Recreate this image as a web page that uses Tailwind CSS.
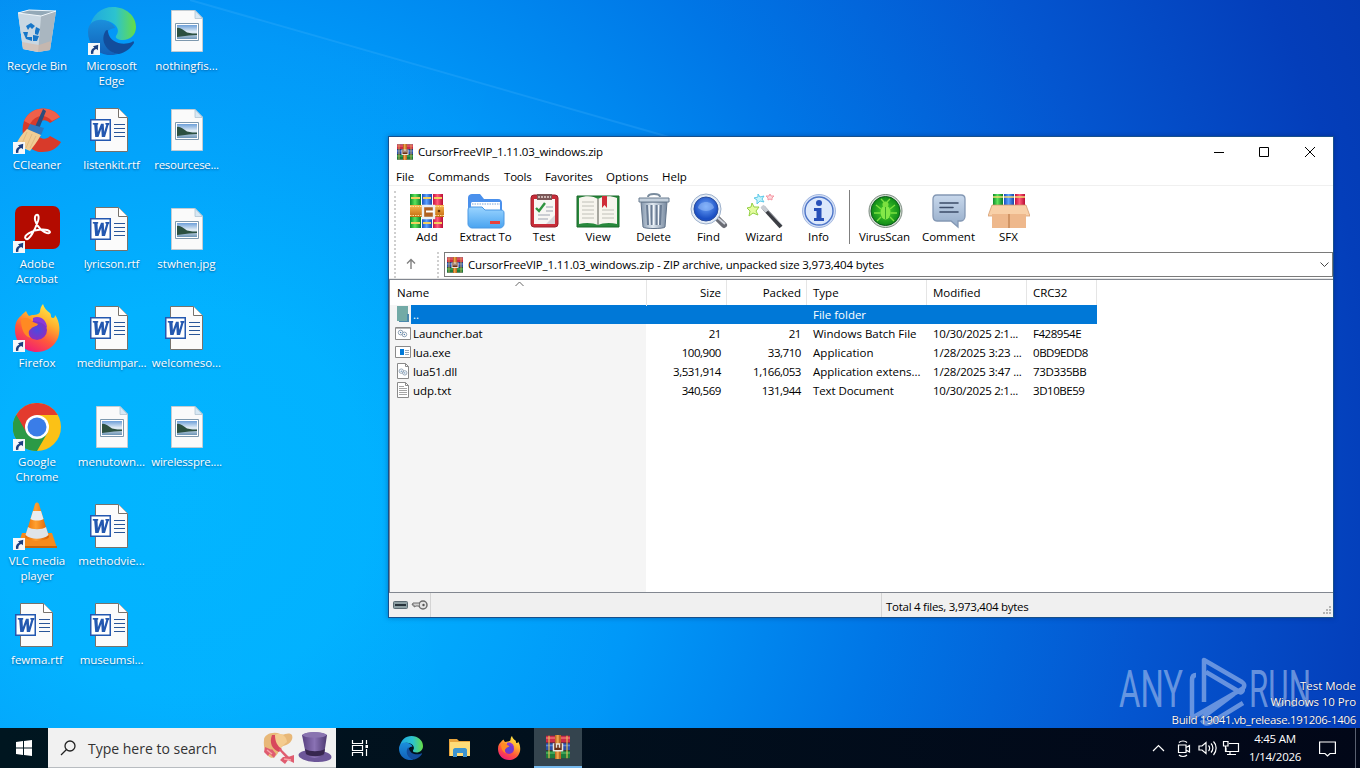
<!DOCTYPE html>
<html lang="en">
<head>
  <meta charset="UTF-8" />
  <meta name="viewport" content="width=device-width, initial-scale=1.0" />
  <title>Desktop</title>
  <script src="https://cdn.jsdelivr.net/npm/@tailwindcss/browser@4"></script>
</head>
<body class="w-[1360px] h-[768px] overflow-hidden bg-[#00a8fb] font-['Open_Sans','Noto_Sans',sans-serif] text-[11.5px] leading-[15px] text-black">

  <!-- shared icons -->
  <svg class="absolute size-0">
    <defs>
      <linearGradient id="gGreen" x1="0" x2="1"><stop offset="0" stop-color="#0c8a2c"/><stop offset=".45" stop-color="#5ce45a"/><stop offset="1" stop-color="#0a7a28"/></linearGradient>
      <linearGradient id="gBlue" x1="0" x2="1"><stop offset="0" stop-color="#1a4fc0"/><stop offset=".45" stop-color="#5aa2ff"/><stop offset="1" stop-color="#1a46a8"/></linearGradient>
      <linearGradient id="gRed" x1="0" x2="1"><stop offset="0" stop-color="#c8103c"/><stop offset=".45" stop-color="#ff5a7a"/><stop offset="1" stop-color="#b80c34"/></linearGradient>
      <linearGradient id="gBelt" x1="0" x2="0" y1="0" y2="1"><stop offset="0" stop-color="#f8b850"/><stop offset="1" stop-color="#c46a10"/></linearGradient>
      <linearGradient id="gEdge1" x1="0" x2="1"><stop offset="0" stop-color="#1fa8e0"/><stop offset=".55" stop-color="#2cc3cf"/><stop offset="1" stop-color="#66dd45"/></linearGradient>
      <linearGradient id="gEdge2" x1="0" x2="0" y1="0" y2="1"><stop offset="0" stop-color="#1b8fdc"/><stop offset="1" stop-color="#1260b8"/></linearGradient>
      <linearGradient id="gFox" x1=".8" y1="0" x2=".3" y2="1"><stop offset="0" stop-color="#fff04a"/><stop offset=".35" stop-color="#ffb02e"/><stop offset=".65" stop-color="#ff5a3a"/><stop offset="1" stop-color="#f01a78"/></linearGradient>
      <linearGradient id="gCone" x1="0" x2="1"><stop offset="0" stop-color="#e86a00"/><stop offset=".45" stop-color="#ffa030"/><stop offset="1" stop-color="#d85c00"/></linearGradient>
      <linearGradient id="gPhoto" x1="0" x2="0" y1="0" y2="1"><stop offset="0" stop-color="#6d9fd8"/><stop offset=".5" stop-color="#e4eef6"/><stop offset="1" stop-color="#6b93b4"/></linearGradient>
      <linearGradient id="gFolder" x1="0" x2="0" y1="0" y2="1"><stop offset="0" stop-color="#9ad4ff"/><stop offset="1" stop-color="#4aa4f0"/></linearGradient>
      <linearGradient id="gSteel" x1="0" x2="1"><stop offset="0" stop-color="#8496ac"/><stop offset=".45" stop-color="#dfe8f0"/><stop offset="1" stop-color="#75879e"/></linearGradient>
      <linearGradient id="gNote" x1="0" x2="0" y1="0" y2="1"><stop offset="0" stop-color="#c8d8ec"/><stop offset="1" stop-color="#94abc8"/></linearGradient>
      <radialGradient id="gLens" cx=".5" cy=".4"><stop offset="0" stop-color="#6aa2f8"/><stop offset="1" stop-color="#1c50c4"/></radialGradient>
      <radialGradient id="gBug"><stop offset="0" stop-color="#4cd42c"/><stop offset="1" stop-color="#108a18"/></radialGradient>
      <radialGradient id="gPurple"><stop offset="0" stop-color="#4a4be0"/><stop offset="1" stop-color="#8a2fc0"/></radialGradient>
      <linearGradient id="gHat" x1="0" x2="1"><stop offset="0" stop-color="#584080"/><stop offset=".5" stop-color="#8a72b4"/><stop offset="1" stop-color="#4c3870"/></linearGradient>
    </defs>

    <symbol id="shortcut" viewBox="0 0 12 12">
      <path d="M0 0h12v12H0z" fill="#f6f8fa"/>
      <path d="M3 11C2.400 7.500 4 5.500 6.300 4.800L5 3.200 10.200 1.800 9.900 7.200 8.300 6C6.400 6.500 5 8 5.400 10.800z" fill="#1c3f80"/>
    </symbol>

    <symbol id="rtf" viewBox="0 0 48 48">
      <path d="M7.500 2.500H30.500L39.500 11.500V45.500H7.500z" fill="#fbfbfb" stroke="#77726c"/>
      <path d="M30.500 2.500V11.500H39.500" fill="#fff" stroke="#77726c"/>
      <path d="M26 18.500H37M26 22.500H37M26 26.500H37M26 30.500H37" stroke="#2a5699" stroke-width="1.200"/>
      <path d="M2 13H23V35H2z" fill="#2458b0"/>
      <path d="M3.500 14.500H21.500V33.500H3.500z" fill="#fff"/>
      <path d="M4.800 17H10.200V18.500L9.500 18.700 9.900 26 13 17.800H15.700L16.200 26 18.300 18.700 17.400 18.500V17H21.500L21.200 18.700 20.500 19 17 31H13.800L13.300 23 10.500 31H7.200L6.200 18.800 4.800 18.600z" fill="#2458b0"/>
    </symbol>

    <symbol id="jpg" viewBox="0 0 48 48">
      <path d="M8.500 3.500H32L39.500 11V44.500H8.500z" fill="#fafafa" stroke="#c4ccd2"/>
      <path d="M32 3.500V11.500H39.500z" fill="#d8e8f4" stroke="#b0c4d2" stroke-width=".8"/>
      <path d="M12.500 16.500H35.500V33.500H12.500z" fill="#fff" stroke="#7d98ae"/>
      <path d="M14 18H34V32H14z" fill="url(#gPhoto)"/>
      <path d="M14 21C17 20 20 23 24 25.500 28 26.500 31 26.500 34 26.600V28L26 28.500 14 30z" fill="#2c5040"/>
    </symbol>

    <symbol id="edge" viewBox="0 0 48 48">
      <path d="M2 20C4 8 13 0 25 0 38 0 48 9 48 20 48 28 42 33 35 33 30 33 27 31 28 29 30 26 31 23 28 19 24 14 15 12 8 15 5 16 3 18 2 20z" fill="url(#gEdge1)"/>
      <path d="M0 25C0 16 7 12 15 13 22 14 26 18 27 21 18 22 15 30 18 37 20 42 25 46 30 47 13 52 0 40 0 25z" fill="url(#gEdge2)"/>
      <path d="M17 25C12 34 19 46 31 47 38 45 43 41 46 36 46 34 45 34 44 35 35 39 22 36 20 25 20 22 18 23 17 25z" fill="#124d9c"/>
    </symbol>

    <symbol id="firefox" viewBox="0 0 48 48">
      <path d="M30 0C31 4 34 7 37 9 38 10 38 12 38 13 40 15 42 14 42 11 47 17 48 29 44 36 40 44 32 48 24 48 12 48 2 39 2 26 2 18 5 14 8 12 9 10 12 8 13 7 14 9 15 11 16 12 20 10 25 12 27 8 27 5 28 2 30 0z" fill="url(#gFox)"/>
      <circle cx="24" cy="26" r="10" fill="url(#gPurple)"/>
      <path d="M8 16C12 12 18 15 20 18L25 20C24 23 19 22 18 25 15 26 15 31 18 34 12 33 8 26 8 16z" fill="#ff8a22"/>
      <path d="M20 14C27 11 34 16 34 24 30 18 26 18 20 17z" fill="#8a3ad8"/>
    </symbol>

    <symbol id="rar" viewBox="0 0 32 32">
      <path d="M0 1H32V31H0z" fill="#3c2438"/>
      <path d="M0 1H32V10H0z" fill="#c82c48"/><path d="M0 3H32V5H0z" fill="#ec6c74"/>
      <path d="M0 11H32V20H0z" fill="#2c50a8"/><path d="M0 13H32V15H0z" fill="#5a84d8"/>
      <path d="M0 21H32V31H0z" fill="#1c7c3c"/><path d="M0 23H32V25H0z" fill="#4cb060"/>
      <path d="M3 1H5V31H3zM27 1H29V31H27z" fill="#e8c050" opacity=".75"/>
      <path d="M12 0H20V32H12z" fill="#c06c24"/><path d="M14 0H17V32H14z" fill="#eca44c"/>
      <path d="M9 11H23V22H9z" fill="#e8e4dc"/><path d="M11 11H13V17H15V13H17V17H19V11H21V20H11z" fill="#6a3018"/>
    </symbol>

    <symbol id="gears" viewBox="0 0 16 16">
      <g fill="none" stroke="#8a9db0"><circle cx="6" cy="7" r="2.500"/><circle cx="10" cy="9" r="2.500"/></g>
      <circle cx="6" cy="7" r=".8" fill="#4f81b0"/><circle cx="10" cy="9" r=".8" fill="#4f81b0"/>
    </symbol>
  </svg>

  <!-- wallpaper -->
  <svg class="absolute inset-0 -z-10" width="1360" height="728" viewBox="0 0 1360 728">
    <defs>
      <radialGradient id="wall" gradientUnits="userSpaceOnUse" cx="180" cy="500" r="1290">
        <stop offset="0" stop-color="#00b4ff"/><stop offset=".15" stop-color="#00b1ff"/><stop offset=".36" stop-color="#0098f8"/>
        <stop offset=".55" stop-color="#0076e6"/><stop offset=".75" stop-color="#0456d0"/><stop offset=".93" stop-color="#043eba"/><stop offset="1" stop-color="#043ab2"/>
      </radialGradient>
      <linearGradient id="beam" x1="0" x2="1"><stop offset="0" stop-color="#fff" stop-opacity=".015"/><stop offset="1" stop-color="#fff" stop-opacity="0"/></linearGradient>
    </defs>
    <path d="M0 0H1360V728H0z" fill="url(#wall)"/>
    <path d="M190 0L700 146V728H0V0z" fill="url(#beam)"/>
    <path d="M190 0L690 143" stroke="#5cc0ff" stroke-opacity=".2" stroke-width="2"/>
  </svg>

  <div class="flex h-[728px] relative">
    <!-- desktop icons, one list per column -->
    <ul class="w-[74px] pt-[7px] text-white text-center [text-shadow:0_1px_2px_rgb(0_40_90/0.6)]">
      <li class="h-[99px] flex flex-col items-center">
        <svg class="size-12 mb-[3px]" viewBox="0 0 48 48">
          <path d="M5 6L16 3 43 4 37 43 25 45 10 42z" fill="#dce4ea"/>
          <path d="M5 6L28 9 25 45 10 42z" fill="#c9d7e2"/>
          <path d="M28 9L43 4 37 43 25 45z" fill="#a9b6c0"/>
          <path d="M5 6L16 3 43 4 28 9z" fill="#93a9b8" stroke="#eef5fa"/>
          <path d="M9 35L26 38 38 34 37 43 25 45 10 42z" fill="#d8b8a4" opacity=".6"/>
          <g fill="#1676c8"><path d="M13 19L18 16 22 19 19 22 17 20 15 23z"/><path d="M23 20L27 22 25 28 22 27 22 24z"/><path d="M10 25L15 25 14 30 19 30 19 34 13 32z"/><path d="M20 28L26 29 24 34 20 34z"/></g>
        </svg>
        <span>Recycle Bin</span>
      </li>
      <li class="h-[99px] flex flex-col items-center relative">
        <svg class="size-12 mb-[3px]" viewBox="0 0 48 48">
          <path d="M47 11C38-2 17 0 11 15 6 31 15 46 29 46 37 46 44 43 48 36L37 30C33 35 25 33 24 26 23 17 30 10 37 17z" fill="#d83a2a"/>
          <path d="M47 11C38-2 17 0 11 15L17 18C22 9 32 7 39 15z" fill="#f0604a"/>
          <path d="M30 3L33 5 26 23 22 21z" fill="#2c4c7c"/>
          <path d="M17 18L31 22 28 29 14 24z" fill="#2f78c0"/>
          <path d="M14 23L28 29C24 36 20 41 17 45L3 39C5 33 9 28 14 23z" fill="#f0cd94"/>
          <path d="M14 26L8 40M19 28L13 42M23 30L17 42" stroke="#d8b078" stroke-width=".7"/>
        </svg>
        <svg class="absolute left-[13px] top-[36px] size-3"><use href="#shortcut"/></svg>
        <span>CCleaner</span>
      </li>
      <li class="h-[99px] flex flex-col items-center relative">
        <svg class="size-12 mb-[3px]" viewBox="0 0 48 48">
          <rect x="2" y="1" width="45" height="43" rx="7" fill="#b30b00"/>
          <path d="M13 34C9 31 19 25 28 24.500 38 24 39 29 34 28 27 26 21 17 22 12 23 8 27 9 25 16 22 25 16 36 13 34z" fill="none" stroke="#fff" stroke-width="2"/>
        </svg>
        <svg class="absolute left-[13px] top-[36px] size-3"><use href="#shortcut"/></svg>
        <span>Adobe<br />Acrobat</span>
      </li>
      <li class="h-[99px] flex flex-col items-center relative">
        <svg class="size-12 mb-[3px]"><use href="#firefox"/></svg>
        <svg class="absolute left-[13px] top-[36px] size-3"><use href="#shortcut"/></svg>
        <span>Firefox</span>
      </li>
      <li class="h-[99px] flex flex-col items-center relative">
        <svg class="size-12 mb-[3px]" viewBox="0 0 48 48">
          <circle cx="24" cy="24" r="24" fill="#fbc116"/>
          <path d="M24 24L34.400 30 24 48A24 24 0 0 1 3.200 12z" fill="#2b9a46"/>
          <path d="M3.200 12A24 24 0 0 1 44.800 12H24L13.600 30z" fill="#e33b2e"/>
          <path d="M3.200 12L13.600 30 24 36 24 48A24 24 0 0 1 3.200 12z" fill="#2b9a46"/>
          <circle cx="24" cy="24" r="12" fill="#fff"/><circle cx="24" cy="24" r="9.500" fill="#3a7de8"/>
        </svg>
        <svg class="absolute left-[13px] top-[36px] size-3"><use href="#shortcut"/></svg>
        <span>Google<br />Chrome</span>
      </li>
      <li class="h-[99px] flex flex-col items-center relative">
        <svg class="size-12 mb-[3px]" viewBox="0 0 48 48">
          <path d="M9 31H39L44 46H4z" fill="#f58a1c"/><path d="M4 44H44V46H4z" fill="#c86408"/>
          <path d="M22 2C23 0 25 0 26 2L36 35C32 40 16 40 12 35z" fill="url(#gCone)"/>
          <path d="M20 9H28L30.500 17C27 19 21 19 17.500 17z" fill="#e9edf0"/>
          <path d="M15 25C19 28 29 28 33 25L35.500 33C30 38 18 38 12.500 33z" fill="#dfe4e8"/>
        </svg>
        <svg class="absolute left-[13px] top-[36px] size-3"><use href="#shortcut"/></svg>
        <span>VLC media<br />player</span>
      </li>
      <li class="h-[99px] flex flex-col items-center">
        <svg class="size-12 mb-[3px]"><use href="#rtf"/></svg>
        <span>fewma.rtf</span>
      </li>
    </ul>
    <ul class="w-[75px] pt-[7px] text-white text-center [text-shadow:0_1px_2px_rgb(0_40_90/0.6)]">
      <li class="h-[99px] flex flex-col items-center relative">
        <svg class="size-12 mb-[3px]"><use href="#edge"/></svg>
        <svg class="absolute left-[14px] top-[36px] size-3"><use href="#shortcut"/></svg>
        <span>Microsoft<br />Edge</span>
      </li>
      <li class="h-[99px] flex flex-col items-center"><svg class="size-12 mb-[3px]"><use href="#rtf"/></svg><span class="tracking-[-0.1px]">listenkit.rtf</span></li>
      <li class="h-[99px] flex flex-col items-center"><svg class="size-12 mb-[3px]"><use href="#rtf"/></svg><span class="tracking-[-0.1px]">lyricson.rtf</span></li>
      <li class="h-[99px] flex flex-col items-center"><svg class="size-12 mb-[3px]"><use href="#rtf"/></svg><span class="tracking-[-0.2px]">mediumpar...</span></li>
      <li class="h-[99px] flex flex-col items-center"><svg class="size-12 mb-[3px]"><use href="#jpg"/></svg><span>menutown...</span></li>
      <li class="h-[99px] flex flex-col items-center"><svg class="size-12 mb-[3px]"><use href="#rtf"/></svg><span>methodvie...</span></li>
      <li class="h-[99px] flex flex-col items-center"><svg class="size-12 mb-[3px]"><use href="#rtf"/></svg><span class="tracking-[-0.1px]">museumsi...</span></li>
    </ul>
    <ul class="w-[75px] pt-[7px] text-white text-center [text-shadow:0_1px_2px_rgb(0_40_90/0.6)]">
      <li class="h-[99px] flex flex-col items-center"><svg class="size-12 mb-[3px]"><use href="#jpg"/></svg><span>nothingfis...</span></li>
      <li class="h-[99px] flex flex-col items-center"><svg class="size-12 mb-[3px]"><use href="#jpg"/></svg><span class="tracking-[-0.3px]">resourcese...</span></li>
      <li class="h-[99px] flex flex-col items-center"><svg class="size-12 mb-[3px]"><use href="#jpg"/></svg><span>stwhen.jpg</span></li>
      <li class="h-[99px] flex flex-col items-center"><svg class="size-12 mb-[3px]"><use href="#rtf"/></svg><span>welcomeso...</span></li>
      <li class="h-[99px] flex flex-col items-center"><svg class="size-12 mb-[3px]"><use href="#jpg"/></svg><span class="tracking-[-0.2px]">wirelesspre....</span></li>
    </ul>

    <!-- watermark -->
    <svg class="absolute left-[1110px] top-[650px] overflow-visible" width="210" height="74" viewBox="0 0 210 74">
      <g fill="#a9c2ee" fill-opacity=".6" font-family="Roboto" font-size="51">
        <text x="9" y="57" textLength="64" lengthAdjust="spacingAndGlyphs">ANY</text>
        <text x="139" y="57" textLength="62" lengthAdjust="spacingAndGlyphs">RUN</text>
      </g>
      <path d="M86 25C83 25 82 27 82 30V68L132 39C135 37 135 34 132 32L94 10V52M92 70C94 74 98 74 102 72L133 53M96 22L128 41C131 44 134 41 132 38M92 68L124 44" fill="none" stroke="#a9c2ee" stroke-opacity=".6" stroke-width="4.500" stroke-linejoin="round"/>
    </svg>
    <div class="absolute right-[4px] top-[678px] text-right text-white flex flex-col [text-shadow:0_0_1px_#003]">
      <span class="h-4">Test Mode</span>
      <span class="h-[18px] tracking-[-0.08px]">Windows 10 Pro</span>
      <span class="tracking-[-0.32px]">Build 19041.vb_release.191206-1406</span>
    </div>

    <!-- archive window -->
    <main class="absolute left-[388px] top-[136px] w-[946px] h-[482px] border border-[#17508c] bg-white flex flex-col shadow-[0_0_5px_rgb(0_20_80/0.35)]">
      <header class="h-[29px] mb-px flex items-center pl-2 shrink-0">
        <svg class="size-4 mr-[5px]"><use href="#rar"/></svg>
        <span class="flex-1 tracking-[-0.19px]">CursorFreeVIP_1.11.03_windows.zip</span>
        <svg width="138" height="28" viewBox="0 0 138 28" fill="none" stroke="#000">
          <path d="M19 14.500H29"/><path d="M64.500 9.500H73.500V18.500H64.500z"/><path d="M110 9L120 19M120 9L110 19"/>
        </svg>
      </header>
      <nav class="h-[19px] flex items-center shrink-0 pl-[7px] border-b border-[#f0f0f0]">
        <span class="w-[32px]">File</span><span class="w-[76px]">Commands</span><span class="w-[41px] tracking-[-0.2px]">Tools</span><span class="w-[61px] tracking-[-0.1px]">Favorites</span><span class="w-[56px]">Options</span><span>Help</span>
      </nav>

      <div class="h-[64px] shrink-0 flex pt-[7px] pl-[5px] text-center">
        <i class="h-[59px] w-[5px] border-l-2 border-dotted border-[#cfcfcf] mr-px -mt-0.5"></i>
        <div class="w-[54px] flex flex-col items-center">
          <svg class="size-9" viewBox="0 0 36 36">
            <path d="M1 1H12V35H1z" fill="url(#gGreen)"/><path d="M13 1H23V35H13z" fill="url(#gBlue)"/><path d="M24 1H34V35H24z" fill="url(#gRed)"/>
            <path d="M2 4H11V6H2zM14 4H22V6H14zM25 4H33V6H25zM2 29H11V31H2zM14 29H22V31H14zM25 29H33V31H25z" fill="#f2d060"/>
            <path d="M1 12H35V24H1z" fill="url(#gBelt)"/><path d="M1 13.500H35M1 22.500H35" stroke="#ffe09a" stroke-dasharray="1.500 1"/>
            <path d="M14 13H25V25H14z" fill="#b06020" stroke="#eceff2" stroke-width="2.400"/><path d="M17 18.500H25" stroke="#fff" stroke-width="2"/>
            <circle cx="30" cy="18" r="1.300" fill="#6c3408"/>
          </svg>Add
        </div>
        <div class="w-[63px] flex flex-col items-center">
          <svg class="size-9 overflow-visible" viewBox="0 0 36 36">
            <path d="M0 5C0 2 2 1 4 1H12L16 6H30C33 6 34 8 34 10V20H0z" fill="#4a90ec"/>
            <path d="M3 11C3 9 4 9 5 9H32V22H3z" fill="#fff"/><path d="M4 11H32" stroke="#a8c4e4" stroke-width="1.500" stroke-dasharray="1.500 1"/>
            <path d="M0 17C0 15 1 14 3 14H14L17 17H33C35 17 36 18 36 20V31C36 33 34 35 32 35H4C2 35 0 33 0 31z" fill="url(#gFolder)" stroke="#4a98e4"/>
            <rect x="22" y="28" width="10" height="3" fill="#e8403c"/>
          </svg><span class="tracking-[-0.15px]">Extract To</span>
        </div>
        <div class="w-[54px] flex flex-col items-center">
          <svg class="size-9" viewBox="0 0 36 36">
            <rect x="5" y="2" width="27" height="32" rx="3" fill="#c82c38" stroke="#98202c"/>
            <path d="M8 6H29V31H8z" fill="#f8f6f4"/>
            <path d="M11 1H26V7H11z" fill="#7c5858"/><path d="M12 4H25" stroke="#e8d4d0" stroke-width="1.500" stroke-dasharray="2 1"/>
            <path d="M10 15L13 18 19 10" fill="none" stroke="#2f9440" stroke-width="2.400"/>
            <path d="M20 14H27M20 18H27M12 22H24M12 26H22" stroke="#bcc0c8" stroke-width="1.300"/>
            <path d="M29 22L20 31H29z" fill="#d8d6da"/>
          </svg>Test
        </div>
        <div class="w-[54px] flex flex-col items-center">
          <svg class="w-[44px] h-9" viewBox="0 0 44 36">
            <path d="M1 3H43V34H1z" fill="#28883c" stroke="#186828"/>
            <path d="M3 5C10 2 18 3 22 6 26 3 34 2 41 5V31C34 29 26 30 22 32 18 30 10 29 3 31z" fill="#f7f5ee"/>
            <path d="M6 9H18M6 13H18M6 17H18M6 21H18M6 25H18M26 17H38M26 21H38M26 25H38" stroke="#c0c0b8"/>
            <path d="M22 6V32" stroke="#8c8c84" stroke-width="1.500"/>
            <path d="M26 3H31V15L28.500 12 26 15z" fill="#d02c38"/>
          </svg>View
        </div>
        <div class="w-[57px] flex flex-col items-center">
          <svg class="size-9" viewBox="0 0 36 36">
            <path d="M5 9H31L29 34C28 36 8 36 7 34z" fill="url(#gSteel)" stroke="#62748a"/>
            <path d="M11 12L12 32M15.500 12V32M20.500 12V32M25 12L24 32" stroke="#6a7c94" stroke-width="2"/>
            <path d="M13 12L14 32M17.500 12V32M22.500 12V32" stroke="#f4f8fc"/>
            <path d="M3 5H33V9H3z" fill="#c4d0dc" stroke="#6a7c90"/><path d="M12 4C12 0 24 0 24 4" fill="none" stroke="#7a8c9e" stroke-width="2"/>
          </svg>Delete
        </div>
        <div class="w-[53px] flex flex-col items-center">
          <svg class="size-9 overflow-visible" viewBox="0 0 36 36">
            <path d="M26 25L33 32" stroke="#6a6c74" stroke-width="6" stroke-linecap="round"/><path d="M27 25L34 31" stroke="#d0d4dc" stroke-width="2"/>
            <circle cx="15" cy="16" r="15" fill="#e4ecf6" stroke="#9cb0cc"/>
            <circle cx="15" cy="16" r="12" fill="url(#gLens)" stroke="#2a4c9c"/>
            <path d="M7 15C8 7 22 7 23 15 18 19 12 19 7 15z" fill="#a8ccff" opacity=".45"/>
          </svg>Find
        </div>
        <div class="w-[58px] flex flex-col items-center">
          <svg class="size-9 overflow-visible" viewBox="0 0 36 36">
            <path d="M17 14L35 34" stroke="#3c3e44" stroke-width="4"/><path d="M18 13L36 32" stroke="#a8acb4"/><path d="M16 13L21 18.500" stroke="#c8ccd2" stroke-width="4"/>
            <path d="M6 10L8 14 13 14 10 18 12 22 7 20 3 23 4 18 1 15 5 14z" fill="#e4fca0" stroke="#94d044"/>
            <path d="M12 1L14 4 18 3 16 6 18 9 14 8 11 11 11 7 8 5 12 4z" fill="#c4f4fc" stroke="#5cc8e8"/>
            <path d="M24 1L25 3 28 3 26 5 26 7 24 6 22 7 22 5 20 3 23 3z" fill="#ffd8dc" stroke="#f498a4"/>
          </svg>Wizard
        </div>
        <div class="w-[51px] flex flex-col items-center">
          <svg class="size-9" viewBox="0 0 36 36">
            <circle cx="18" cy="18" r="16.500" fill="#d4e0f6" stroke="#a4b8e0"/>
            <circle cx="18" cy="18" r="14" fill="#dce8fb" stroke="#4c74c8" stroke-width="1.400"/>
            <circle cx="18" cy="10" r="3" fill="#2850b8"/><path d="M13 15H20.500V25H23V28H13V25H15.500V18H13z" fill="#2850b8"/>
          </svg>Info
        </div>
        <i class="w-px h-[54px] bg-[#7f7f7f] ml-[5px] mr-[3px] -mt-[3px]"></i>
        <div class="w-[63px] flex flex-col items-center">
          <svg class="size-9" viewBox="0 0 36 36">
            <circle cx="18.500" cy="18" r="16.500" fill="#d4dcd4" stroke="#7c8c80"/><circle cx="18.500" cy="18" r="14.500" fill="url(#gBug)" stroke="#0a5c18"/>
            <ellipse cx="18.500" cy="19.500" rx="5" ry="7" fill="#84e848"/><circle cx="18.500" cy="11.500" r="3" fill="#7ce040"/>
            <path d="M14 16L9 12M13.500 20H7M14 24L10 28M23 16L28 12M23.500 20H30M23 24L27 28M17 9L14 6M20 9L23 6" stroke="#7ce040" stroke-width="1.400"/><path d="M18.500 14V26" stroke="#38a828"/>
          </svg><span class="tracking-[-0.15px]">VirusScan</span>
        </div>
        <div class="w-[65px] flex flex-col items-center">
          <svg class="size-9" viewBox="0 0 36 36">
            <path d="M6 2H30C33 2 34 4 34 6V23C34 26 32 28 30 28H27L27 34 20 28H6C3 28 2 26 2 23V6C2 4 3 2 6 2z" fill="url(#gNote)" stroke="#8498b4" stroke-width="1.300"/>
            <path d="M9 10H27M9 14.500H22M9 19H27" stroke="#3c4c68" stroke-width="1.600" stroke-linecap="round"/>
          </svg>Comment
        </div>
        <div class="w-[55px] flex flex-col items-center">
          <svg class="w-[42px] h-9" viewBox="0 0 42 36">
            <path d="M5 1H15V14H5z" fill="url(#gGreen)"/><path d="M16 1H26V14H16z" fill="url(#gBlue)"/><path d="M27 1H37V14H27z" fill="url(#gRed)"/><path d="M5 4H15M16 4H26M27 4H37" stroke="#f4dc70" stroke-width="1.500"/>
            <path d="M4 12H38V35H4z" fill="#d89c70"/><path d="M4 12L0 23H20L38 23H42L38 12z" fill="#f8d0a8" stroke="#d09464" stroke-width=".7"/>
            <path d="M4 21H38V35H4z" fill="#eeb88c"/><path d="M20 21H22V35H20z" fill="#d09464"/>
          </svg>SFX
        </div>
      </div>

      <div class="h-[29px] shrink-0 flex pl-[5px] pt-0.5 border-b border-[#e6e6e6]">
        <i class="w-[12px] border-l-2 border-dotted border-[#cfcfcf]"></i>
        <svg class="mt-1.5" width="10" height="12" viewBox="0 0 10 12" fill="none" stroke="#808080" stroke-width="1.400"><path d="M5 11V1.500M1 5.500L5 1.500 9 5.500"/></svg>
        <i class="w-[7px] border-l-2 border-dotted border-[#cfcfcf] ml-[21px]"></i>
        <div class="flex-1 h-[25px] border border-[#7a7a7a] flex items-center pl-0.5">
          <svg class="size-4 mr-[5px]"><use href="#rar"/></svg>
          <span class="flex-1 tracking-[-0.155px]">CursorFreeVIP_1.11.03_windows.zip - ZIP archive, unpacked size 3,973,404 bytes</span>
          <svg class="mr-[3px]" width="9" height="6" fill="none" stroke="#444"><path d="M.5 .5L4.500 4.500 8.500 .5"/></svg>
        </div>
      </div>

      <section class="flex-1 border-t border-l border-b border-[#828790] relative bg-[linear-gradient(#f5f5f5,#f5f5f5)] bg-no-repeat bg-size-[256px_100%]">
        <div class="grid grid-cols-[257px_80px_80px_120px_100px_70px] h-[25px] bg-white leading-[26px] *:border-r *:border-[#e5e5e5] *:px-[6px]">
          <div class="relative !pl-[7px]">Name<svg class="absolute left-[125px] top-[1px]" width="9" height="6" fill="none" stroke="#666"><path d="M.5 5L4.500 1 8.500 5"/></svg></div>
          <div class="text-right !px-[5px]">Size</div><div class="text-right !px-[5px]">Packed</div><div>Type</div><div>Modified</div><div class="tracking-[-0.1px]">CRC32</div>
        </div>
        <div class="grid grid-cols-[21px_236px_80px_80px_120px_100px_70px] auto-rows-[19px] leading-[19px] whitespace-nowrap">
          <svg width="21" height="19" viewBox="0 0 21 19"><path d="M7 1H18V16H7z" fill="#72aaa6"/><path d="M17 9H19V17H9V16H17z" fill="#4a88ac"/></svg>
          <div class="col-span-6 bg-[#0078d7] text-white grid grid-cols-[396px_1fr]"><span class="pl-0.5">..</span><span class="pl-[6px]">File folder</span></div>

          <svg width="21" height="19" viewBox="0 0 21 19"><path d="M5.500 3.500H20.500V15.500H5.500z" fill="#fff" stroke="#8a8a8a"/><path d="M6 4.500H20" stroke="#b8b8b8"/><use href="#gears" x="5" y="2" width="15" height="15"/></svg>
          <div class="pl-0.5 tracking-[-0.1px]">Launcher.bat</div><div class="text-right pr-[6px] tracking-[-0.4px]">21</div><div class="text-right pr-[6px] tracking-[-0.4px]">21</div><div class="pl-[6px]">Windows Batch File</div><div class="pl-[6px] tracking-[-0.25px]">10/30/2025 2:1...</div><div class="pl-[6px] tracking-[-0.45px]">F428954E</div>

          <svg width="21" height="19" viewBox="0 0 21 19"><path d="M5.500 3.500H20.500V14.500H5.500z" fill="#fff" stroke="#8a8a8a"/><path d="M10 6H14V12H10z" fill="#0078d7"/><path d="M15 7.500H19M15 9.500H19M15 11.500H19" stroke="#98a8b8"/></svg>
          <div class="pl-0.5 tracking-[-0.1px]">lua.exe</div><div class="text-right pr-[6px] tracking-[-0.45px]">100,900</div><div class="text-right pr-[6px] tracking-[-0.45px]">33,710</div><div class="pl-[6px] tracking-[0.05px]">Application</div><div class="pl-[6px] tracking-[-0.2px]">1/28/2025 3:23 ...</div><div class="pl-[6px] tracking-[-0.45px]">0BD9EDD8</div>

          <svg width="21" height="19" viewBox="0 0 21 19"><path d="M7.500 1.500H15.500L18.500 4.500V16.500H7.500z" fill="#fff" stroke="#8a8a8a"/><path d="M15.500 1.500V4.500H18.500" fill="none" stroke="#8a8a8a"/><use href="#gears" x="6" y="3" width="14" height="14"/></svg>
          <div class="pl-0.5 tracking-[-0.15px]">lua51.dll</div><div class="text-right pr-[6px] tracking-[-0.45px]">3,531,914</div><div class="text-right pr-[6px] tracking-[-0.45px]">1,166,053</div><div class="pl-[6px]">Application extens...</div><div class="pl-[6px] tracking-[-0.2px]">1/28/2025 3:47 ...</div><div class="pl-[6px] tracking-[-0.35px]">73D335BB</div>

          <svg width="21" height="19" viewBox="0 0 21 19"><path d="M7.500 1.500H15.500L18.500 4.500V16.500H7.500z" fill="#fff" stroke="#8a8a8a"/><path d="M15.500 1.500V4.500H18.500" fill="none" stroke="#8a8a8a"/><path d="M9 5.500H14M9 7.500H17M9 9.500H17M9 11.500H17M9 13.500H17" stroke="#a4a4a4"/></svg>
          <div class="pl-0.5">udp.txt</div><div class="text-right pr-[6px] tracking-[-0.45px]">340,569</div><div class="text-right pr-[6px] tracking-[-0.45px]">131,944</div><div class="pl-[6px] tracking-[-0.1px]">Text Document</div><div class="pl-[6px] tracking-[-0.25px]">10/30/2025 2:1...</div><div class="pl-[6px] tracking-[-0.45px]">3D10BE59</div>
        </div>
      </section>

      <footer class="h-[24px] shrink-0 bg-[#f0f0f0] flex items-center">
        <div class="w-[42px] h-full pl-1 pt-[5px] border-r border-[#d4d4d4]">
          <svg width="36" height="14" viewBox="0 0 36 14" fill="none">
            <rect x=".5" y="3.500" width="14" height="7" rx="1" fill="#8ea0a4" stroke="#5c6c74"/><path d="M2 6H13V8H2z" fill="#28343c"/>
            <circle cx="30" cy="7" r="4" fill="#e4e4e4" stroke="#6c6c6c" stroke-width="1.500"/><circle cx="30.500" cy="7" r="1.200" fill="#555"/>
            <path d="M26 5H20L19 7H21V9L23 8H26" fill="#d0d0d0" stroke="#6c6c6c"/>
          </svg>
        </div>
        <div class="w-[451px] h-full border-r border-[#d4d4d4]"></div>
        <span class="flex-1 pl-1 pt-0.5 tracking-[-0.27px]">Total 4 files, 3,973,404 bytes</span>
        <svg class="self-end mb-[2px] mr-[1px]" width="9" height="9" fill="#b4b4b4"><path d="M6 0h2v2h-2zM6 3h2v2h-2zM6 6h2v2h-2zM3 3h2v2h-2zM3 6h2v2h-2zM0 6h2v2h-2z"/></svg>
      </footer>
    </main>
  </div>

  <!-- taskbar -->
  <footer class="h-10 flex items-center bg-gradient-to-r from-[#001620] to-[#020718] text-white">
    <div class="w-12 flex justify-center">
      <svg width="16" height="16" fill="#fff"><path d="M0 2L7 1V7.500H0zM8 1L16 0V7.500H8zM0 8.500H7V15L0 14zM8 8.500H16V16L8 15z"/></svg>
    </div>
    <div class="w-[288px] h-10 bg-[#f1f1f1] border-b border-[#b8bcc0] flex items-center text-[#333] text-[14px] pl-3">
      <svg width="16" height="16" fill="none" stroke="#222" stroke-width="1.300" class="mr-3"><circle cx="10" cy="6" r="5"/><path d="M6.500 9.500L1 15"/></svg>
      <span class="flex-1 pt-0.5">Type here to search</span>
      <svg width="76" height="36" viewBox="0 0 76 36">
        <path d="M4 10C4 4 14 1 20 4 24 6 28 1 32 5 34 11 28 15 23 16 18 20 18 27 12 28 6 27 3 17 4 10z" fill="#e8b878"/>
        <path d="M15 5C20 2 26 5 27 12L18 20C12 17 11 9 15 5z" fill="#f4cc90"/>
        <path d="M12 5C9 13 12 19 19 22L22 19C17 16 15 11 15 5z" fill="#d8485c"/>
        <path d="M5 17L12 20 8 26 4 22zM12 19L16 24 14 28 9 23zM20 18L29 27 27 29 19 20zM23 27L28 27 34 25 34 33 28 30 25 34 20 30z" fill="#e05c70"/>
        <path d="M7 20L12 24M24 29L31 30" stroke="#f8a4a8" stroke-width="1.500"/>
        <ellipse cx="55" cy="26" rx="16.500" ry="6" fill="#6c5698" transform="rotate(4 55 26)"/>
        <path d="M42 5C48 1 60 1 67 5L64 25C60 29 50 29 46 25z" fill="url(#gHat)"/>
        <path d="M45 19C50 22 60 22 65 19L64 24C60 27 50 27 46 24z" fill="#37264e"/>
        <ellipse cx="54.500" cy="5" rx="12" ry="2.800" fill="#8a74b0"/>
      </svg>
    </div>
    <div class="w-12 flex justify-center">
      <svg width="18" height="16" viewBox="0 0 18 16" fill="none" stroke="#fff" stroke-width="1.200"><path d="M1.500 0V3.500H11.500V0M1.500 16V12.500H11.500V16M1.500 5.500H11.500V10.500H1.500zM15.500 0V4M15.500 9V16"/><path d="M14.500 5H17V8H14.500z" fill="#fff" stroke="none"/></svg>
    </div>
    <div class="w-[54px] flex justify-center"><svg class="size-6"><use href="#edge"/></svg></div>
    <div class="w-[44px] flex justify-center">
      <svg width="22" height="20" viewBox="0 0 22 20"><path d="M0 1H8L10 3H21V18H0z" fill="#e8a43c"/><path d="M1 4H21V18H1z" fill="#ffdc78"/><path d="M4 19V12C4 11 5 10 6 10H16C17 10 18 11 18 12V19H14V15H8V19z" fill="#3c94d0"/></svg>
    </div>
    <div class="w-[54px] flex justify-center"><svg class="size-6"><use href="#firefox"/></svg></div>
    <div class="w-12 -ml-0.5 h-10 bg-[#34444e] border-b-2 border-[#76b9ed] flex justify-center items-center"><svg class="size-6"><use href="#rar"/></svg></div>

    <div class="ml-auto flex items-center h-10">
      <svg width="88" height="20" viewBox="0 0 88 20" fill="none" stroke="#fff" stroke-width="1.200">
        <path d="M1 13L6.500 7.500 12 13"/>
        <path d="M26.500 7H34V14.500H26.500zM34 9.500L37.500 7.500V14L34 12M27 4.500C29 2.500 33 2.500 35 4.500M27 17C29 19 33 19 35 17"/>
        <path d="M47 8H50L54 4.500V15.500L50 12H47zM56.500 7.500C58 9 58 11.500 56.500 13M59 5.500C61.500 8 61.500 12 59 14.500M61.500 3.500C65 7 65 13 61.500 17" />
        <path d="M77 5.500H86.500V13.500H74V9.500M71.500 3.500H76V8H71.500zM73.500 8V14M78 13.500V16.500M75 16.500H84"/>
      </svg>
      <div class="w-[70px] text-center leading-[18px] tracking-[-0.25px]">4:45 AM<br />1/14/2026</div>
      <svg class="ml-[9px]" width="17" height="17" viewBox="0 0 17 17" fill="none" stroke="#fff" stroke-width="1.200"><path d="M.6 2H16.400V13.500H11L8.500 16 6 13.500H.6z"/></svg>
      <i class="h-10 w-px bg-[#5a6070] ml-[19px] mr-1"></i>
    </div>
  </footer>
</body>
</html>
